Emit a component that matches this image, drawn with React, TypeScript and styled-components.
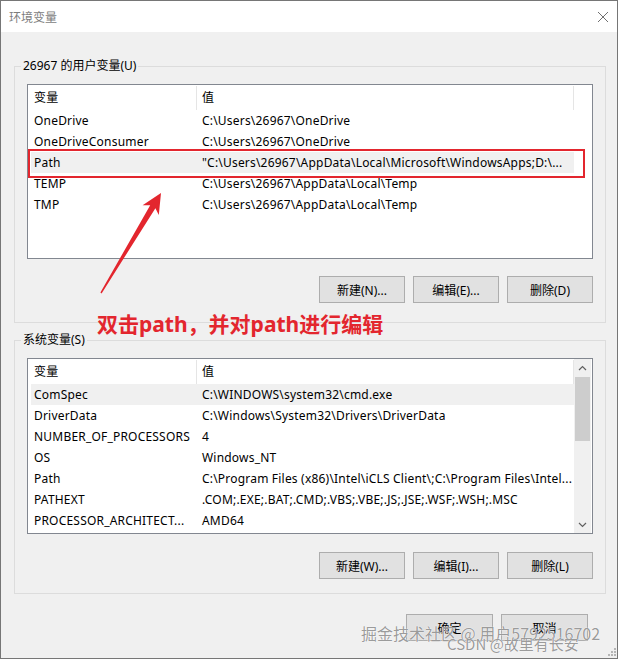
import React from "react";
import styled, { createGlobalStyle } from "styled-components";

const UI_FONT = `"Noto Sans", "Noto Sans CJK SC", sans-serif`;
const RED = "#e3262e";

const GlobalStyle = createGlobalStyle`
  html, body { margin: 0; padding: 0; background: #f0f0f0; }
  body { font-family: ${UI_FONT}; font-size: 12px; color: #000; }
  * { box-sizing: border-box; }
`;

const Window = styled.div`
  position: relative;
  width: 618px;
  height: 659px;
  border: 1px solid #767676;
  background: #f0f0f0;
  display: flex;
  flex-direction: column;
  overflow: hidden;
`;

const TitleBar = styled.div`
  height: 31px;
  flex: none;
  background: #fff;
  display: flex;
  align-items: center;
  justify-content: space-between;
  padding: 0 9px 0 8px;
  font-size: 12px;
  color: #7d7d7d;
`;

const Body = styled.div`
  display: flex;
  flex-direction: column;
  padding: 26px 11px 0 13px;
`;

const GroupBox = styled.fieldset<{ $mt: number }>`
  margin: ${(p) => p.$mt}px 0 0 0;
  padding: 0;
  border: 1px solid #dcdcdc;
  min-width: 0;
`;

const Legend = styled.legend`
  margin-left: 6px;
  padding: 0 2px;
  font-size: 12px;
  line-height: 16px;
  color: #000;
`;

const GroupContent = styled.div<{ $pb: number }>`
  display: flex;
  flex-direction: column;
  padding: 10px 12px ${(p) => p.$pb}px 12px;
`;

const ListBox = styled.div<{ $h: number }>`
  height: ${(p) => p.$h}px;
  border: 1px solid #828790;
  background: #fff;
  display: flex;
  overflow: hidden;
`;

const ListContent = styled.div`
  width: 546px;
  flex: none;
  display: flex;
  flex-direction: column;
  overflow: hidden;
  padding-top: 1px;
  letter-spacing: 0.2px;
`;

const Header = styled.div`
  height: 24px;
  flex: none;
  display: grid;
  grid-template-columns: 169px 377px;
  line-height: 24px;
`;

const HeaderCell = styled.div<{ $pl: number }>`
  padding-left: ${(p) => p.$pl}px;
  border-right: 1px solid #e5e5e5;
  white-space: nowrap;
  overflow: hidden;
`;

const Row = styled.div<{ $hl?: boolean }>`
  margin-left: 3px;
  width: 543px;
  height: 21px;
  flex: none;
  display: grid;
  grid-template-columns: 166px 377px;
  line-height: 21px;
  white-space: nowrap;
  background: ${(p) => (p.$hl ? "#f0f0f0" : "transparent")};
`;

const Cell = styled.div<{ $pl: number }>`
  padding-left: ${(p) => p.$pl}px;
  overflow: hidden;
`;

const ScrollBar = styled.div`
  width: 17px;
  margin-right: 1px;
  flex: none;
  background: #f0f0f0;
  display: flex;
  flex-direction: column;
`;

const ScrollArrow = styled.div`
  height: 17px;
  flex: none;
  display: flex;
  align-items: center;
  justify-content: center;
`;

const Thumb = styled.div`
  height: 64px;
  margin: 1px 1px 0 1px;
  background: #cdcdcd;
  flex: none;
`;

const Spacer = styled.div`
  flex: 1;
`;

const ButtonRow = styled.div<{ $mt: number; $mr?: number }>`
  display: flex;
  justify-content: flex-end;
  gap: 8px;
  margin-top: ${(p) => p.$mt}px;
  margin-right: ${(p) => p.$mr ?? 0}px;
`;

const Button = styled.button<{ $w?: number }>`
  width: ${(p) => p.$w ?? 86}px;
  height: 27px;
  padding: 0;
  border: 1px solid #adadad;
  background: #e1e1e1;
  font-family: ${UI_FONT};
  font-size: 12px;
  color: #000;
`;

const Overlay = styled.div`
  position: absolute;
  left: -1px;
  top: -1px;
  width: 618px;
  height: 659px;
  pointer-events: none;
`;

const RedFrame = styled.div`
  position: absolute;
  left: 28px;
  top: 149px;
  width: 557px;
  height: 29px;
  border: 2px solid ${RED};
`;

const Caption = styled.div`
  position: absolute;
  left: 97px;
  top: 313px;
  font-family: "Noto Sans", "Noto Sans CJK SC", sans-serif;
  font-weight: 700;
  font-size: 21px;
  line-height: 22px;
  color: ${RED};
  white-space: nowrap;
`;

const Watermark = styled.div<{ $x: number; $y: number; $size: number }>`
  position: absolute;
  left: ${(p) => p.$x}px;
  top: ${(p) => p.$y}px;
  font-family: "Noto Sans CJK SC", sans-serif;
  font-size: ${(p) => p.$size}px;
  line-height: ${(p) => p.$size}px;
  color: rgba(110, 110, 110, 0.7);
  text-shadow: 0 0 1px #fff, 0 0 1px #fff;
  white-space: nowrap;
`;

const ArrowSvg = styled.svg`
  position: absolute;
  left: 0;
  top: 0;
`;

const Grip = styled.svg`
  position: absolute;
  right: 2px;
  bottom: 3px;
`;

type Var = { name: string; value: string; hl?: boolean };

const userVars: Var[] = [
  { name: "OneDrive", value: "C:\\Users\\26967\\OneDrive" },
  { name: "OneDriveConsumer", value: "C:\\Users\\26967\\OneDrive" },
  {
    name: "Path",
    value: "\"C:\\Users\\26967\\AppData\\Local\\Microsoft\\WindowsApps;D:\\...",
    hl: true,
  },
  { name: "TEMP", value: "C:\\Users\\26967\\AppData\\Local\\Temp" },
  { name: "TMP", value: "C:\\Users\\26967\\AppData\\Local\\Temp" },
];

const sysVars: Var[] = [
  { name: "ComSpec", value: "C:\\WINDOWS\\system32\\cmd.exe", hl: true },
  { name: "DriverData", value: "C:\\Windows\\System32\\Drivers\\DriverData" },
  { name: "NUMBER_OF_PROCESSORS", value: "4" },
  { name: "OS", value: "Windows_NT" },
  {
    name: "Path",
    value: "C:\\Program Files (x86)\\Intel\\iCLS Client\\;C:\\Program Files\\Intel...",
  },
  { name: "PATHEXT", value: ".COM;.EXE;.BAT;.CMD;.VBS;.VBE;.JS;.JSE;.WSF;.WSH;.MSC" },
  { name: "PROCESSOR_ARCHITECT...", value: "AMD64" },
];

const Chevron = ({ up }: { up: boolean }) => (
  <svg width="9" height="6" viewBox="0 0 9 6">
    <path
      d={up ? "M1 5 L4.5 1.5 L8 5" : "M1 1 L4.5 4.5 L8 1"}
      fill="none"
      stroke="#606060"
      strokeWidth="1.2"
    />
  </svg>
);

const VarList = ({ vars, height, scroll }: { vars: Var[]; height: number; scroll?: boolean }) => (
  <ListBox $h={height}>
    <ListContent>
      <Header>
        <HeaderCell $pl={6}>变量</HeaderCell>
        <HeaderCell $pl={5}>值</HeaderCell>
      </Header>
      {vars.map((v) => (
        <Row key={v.name + v.value} $hl={v.hl}>
          <Cell $pl={3}>{v.name}</Cell>
          <Cell $pl={5}>{v.value}</Cell>
        </Row>
      ))}
    </ListContent>
    {scroll && (
      <ScrollBar>
        <ScrollArrow>
          <Chevron up />
        </ScrollArrow>
        <Thumb />
        <Spacer />
        <ScrollArrow>
          <Chevron up={false} />
        </ScrollArrow>
      </ScrollBar>
    )}
  </ListBox>
);

export default function App() {
  return (
    <>
      <GlobalStyle />
      <Window>
        <TitleBar>
          <span>环境变量</span>
          <svg width="10" height="10" viewBox="0 0 10 10">
            <path d="M0 0 L10 10 M10 0 L0 10" stroke="#707070" strokeWidth="1" />
          </svg>
        </TitleBar>
        <Body>
          <GroupBox $mt={0}>
            <Legend>26967 的用户变量(U)</Legend>
            <GroupContent $pb={19}>
              <VarList vars={userVars} height={175} />
              <ButtonRow $mt={17}>
                <Button>新建(N)...</Button>
                <Button>编辑(E)...</Button>
                <Button>删除(D)</Button>
              </ButtonRow>
            </GroupContent>
          </GroupBox>
          <GroupBox $mt={9}>
            <Legend>系统变量(S)</Legend>
            <GroupContent $pb={14}>
              <VarList vars={sysVars} height={176} scroll />
              <ButtonRow $mt={18}>
                <Button>新建(W)...</Button>
                <Button>编辑(I)...</Button>
                <Button>删除(L)</Button>
              </ButtonRow>
            </GroupContent>
          </GroupBox>
          <ButtonRow $mt={20} $mr={18}>
            <Button $w={87}>确定</Button>
            <Button $w={87}>取消</Button>
          </ButtonRow>
        </Body>
        <Overlay>
          <RedFrame />
          <ArrowSvg width="618" height="659" viewBox="0 0 618 659">
            <polygon
              points="161,193 158.8,215 155.4,208.2 101.6,293.4 100.4,292.6 150.2,205.2 142.6,205.2"
              fill={RED}
            />
          </ArrowSvg>
          <Caption>双击path，并对path进行编辑</Caption>
          <Watermark $x={361} $y={625} $size={16}>
            掘金技术社区 @ 用户5792516702
          </Watermark>
          <Watermark $x={447} $y={636} $size={15}>
            CSDN @故里有长安
          </Watermark>
          <Grip width="8" height="8" viewBox="0 0 8 8">
            <rect x="6" y="0" width="2" height="2" fill="#b5b5b5" />
            <rect x="3" y="3" width="2" height="2" fill="#b5b5b5" />
            <rect x="6" y="3" width="2" height="2" fill="#b5b5b5" />
            <rect x="0" y="6" width="2" height="2" fill="#b5b5b5" />
            <rect x="3" y="6" width="2" height="2" fill="#b5b5b5" />
            <rect x="6" y="6" width="2" height="2" fill="#b5b5b5" />
          </Grip>
        </Overlay>
      </Window>
    </>
  );
}
